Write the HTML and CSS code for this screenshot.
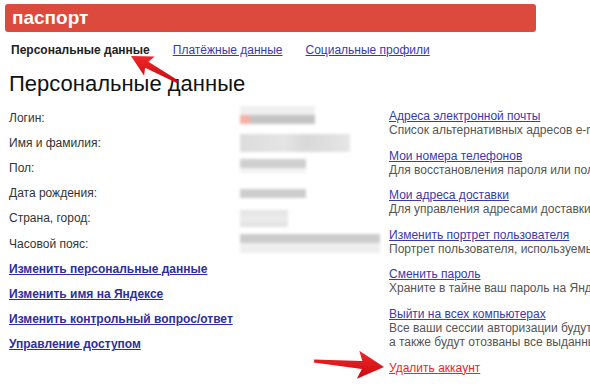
FILE: index.html
```html
<!DOCTYPE html>
<html lang="ru">
    <head>
        <meta charset="UTF-8" />
        <title>Паспорт</title>
        <link rel="stylesheet" href="styles.css">
    </head>
    <body>

        <header class="brand">паспорт</header>

        <nav class="tabs">
            <span class="tab current">Персональные данные</span>
            <a href="#">Платёжные данные</a>
            <a href="#">Социальные профили</a>
        </nav>

        <h1>Персональные данные</h1>

        <main class="columns">
            <div class="info">
                <div class="row"><span class="label">Логин:</span><div class="val v-login"></div></div>
                <div class="row"><span class="label">Имя и фамилия:</span><div class="val v-name"></div></div>
                <div class="row"><span class="label">Пол:</span><div class="val v-sex"></div></div>
                <div class="row"><span class="label">Дата рождения:</span><div class="val v-date"></div></div>
                <div class="row"><span class="label">Страна, город:</span><div class="val v-city"></div></div>
                <div class="row"><span class="label">Часовой пояс:</span><div class="val v-tz"></div></div>
                <div class="row"><a class="strong" href="#">Изменить персональные данные</a></div>
                <div class="row"><a class="strong" href="#">Изменить имя на Яндексе</a></div>
                <div class="row"><a class="strong" href="#">Изменить контрольный вопрос/ответ</a></div>
                <div class="row"><a class="strong" href="#">Управление доступом</a></div>
            </div>

            <div class="side">
                <div class="item">
                    <a href="#">Адреса электронной почты</a>
                    <p>Список альтернативных адресов e-mail</p>
                </div>
                <div class="item">
                    <a href="#">Мои номера телефонов</a>
                    <p>Для восстановления пароля или получения уведомлений</p>
                </div>
                <div class="item">
                    <a href="#">Мои адреса доставки</a>
                    <p>Для управления адресами доставки в Яндекс.Маркете</p>
                </div>
                <div class="item">
                    <a href="#">Изменить портрет пользователя</a>
                    <p>Портрет пользователя, используемый на сервисах Яндекса</p>
                </div>
                <div class="item">
                    <a href="#">Сменить пароль</a>
                    <p>Храните в тайне ваш пароль на Яндексе</p>
                </div>
                <div class="item">
                    <a href="#">Выйти на всех компьютерах</a>
                    <p>Все ваши сессии авторизации будут завершены,</p>
                    <p>а также будут отозваны все выданные токены</p>
                </div>
                <div class="item">
                    <a class="danger" href="#">Удалить аккаунт</a>
                </div>
            </div>
        </main>

        <svg class="arrows" width="590" height="392" viewBox="0 0 590 392">
            <defs>
                <linearGradient id="red" x1="0" y1="0" x2="0" y2="1">
                    <stop offset="0" stop-color="#f0262a" />
                    <stop offset="1" stop-color="#c80c10" />
                </linearGradient>
            </defs>
            <polygon fill="url(#red)" points="178.7,80.7 148.4,61.7 154.7,56.5 131,56 144.1,75.8 145.1,67.8 177.3,83.3" />
            <polygon fill="url(#red)" points="314.1,359.5 362.4,361.1 359.3,350.8 384,367 356.9,378.7 361.8,369.1 313.9,362.5" />
        </svg>

    </body>
</html>
```

FILE: styles.css
```css
* {
  box-sizing: border-box;
}
html, body {
  overflow: hidden;
}
body {
  margin: 0;
  position: relative;
  width: 590px;
  height: 392px;
  font-family: 'Liberation Sans', Arial, sans-serif;
  font-size: 12px;
  color: #333;
  background: #fff;
}
a {
  color: #3a3aa8;
}
.brand {
  margin: 4px 54px 0 5px;
  height: 28px;
  line-height: 27px;
  padding-left: 7px;
  background: #dc4a3e;
  border-radius: 3px;
  color: #fff;
  font-size: 19px;
  font-weight: bold;
}
.tabs {
  display: flex;
  gap: 23px;
  margin-top: 10px;
  padding-left: 11px;
  line-height: 16px;
}
.tab.current {
  font-weight: bold;
  color: #222;
}
h1 {
  margin: 12px 0 0 9px;
  font-size: 22px;
  font-weight: normal;
  line-height: 28px;
  color: #111;
}
.columns {
  display: flex;
  margin-top: 7px;
}
.info {
  width: 389px;
  flex-shrink: 0;
  padding-left: 9px;
}
.row {
  display: flex;
  align-items: center;
  height: 25.2px;
}
.label {
  width: 231px;
  flex-shrink: 0;
}
a.strong {
  font-weight: bold;
  color: #2e2e9e;
}
.val {
  filter: blur(1.5px);
}
.v-login {
  width: 75px;
  height: 18px;
  margin-top: -6px;
  background:
    linear-gradient(90deg, #f6b0a6 0, #f6b0a6 10px, transparent 10px) bottom / 100% 9px no-repeat,
    linear-gradient(#f0f0f0 0, #f0f0f0 50%, #c4c4c4 50%, #c4c4c4 100%);
}
.v-name {
  width: 110px;
  height: 18px;
  background: linear-gradient(90deg, #dcdcdc 0, #e4e4e4 40%, #d8d8d8 60%, #e6e6e6 100%);
}
.v-sex {
  width: 66px;
  height: 14px;
  margin-top: -4px;
  background: linear-gradient(#cfcfcf 0, #cfcfcf 65%, #f3f3f3 65%);
}
.v-date {
  width: 66px;
  height: 9px;
  background: #cdcdcd;
}
.v-city {
  width: 48px;
  height: 17px;
  background: linear-gradient(#e2e2e2 0, #ececec 50%, #e0e0e0 100%);
}
.v-tz {
  width: 140px;
  height: 19px;
  background: linear-gradient(#cccccc 0, #cccccc 48%, #efefef 48%);
}
.side {
  padding-top: 4px;
  white-space: nowrap;
  line-height: 14px;
}
.item {
  margin-bottom: 11.6px;
}
.item p {
  margin: 0;
  color: #555;
}
a.danger {
  color: #e8262a;
}
.arrows {
  position: absolute;
  left: 0;
  top: 0;
  pointer-events: none;
}
```
